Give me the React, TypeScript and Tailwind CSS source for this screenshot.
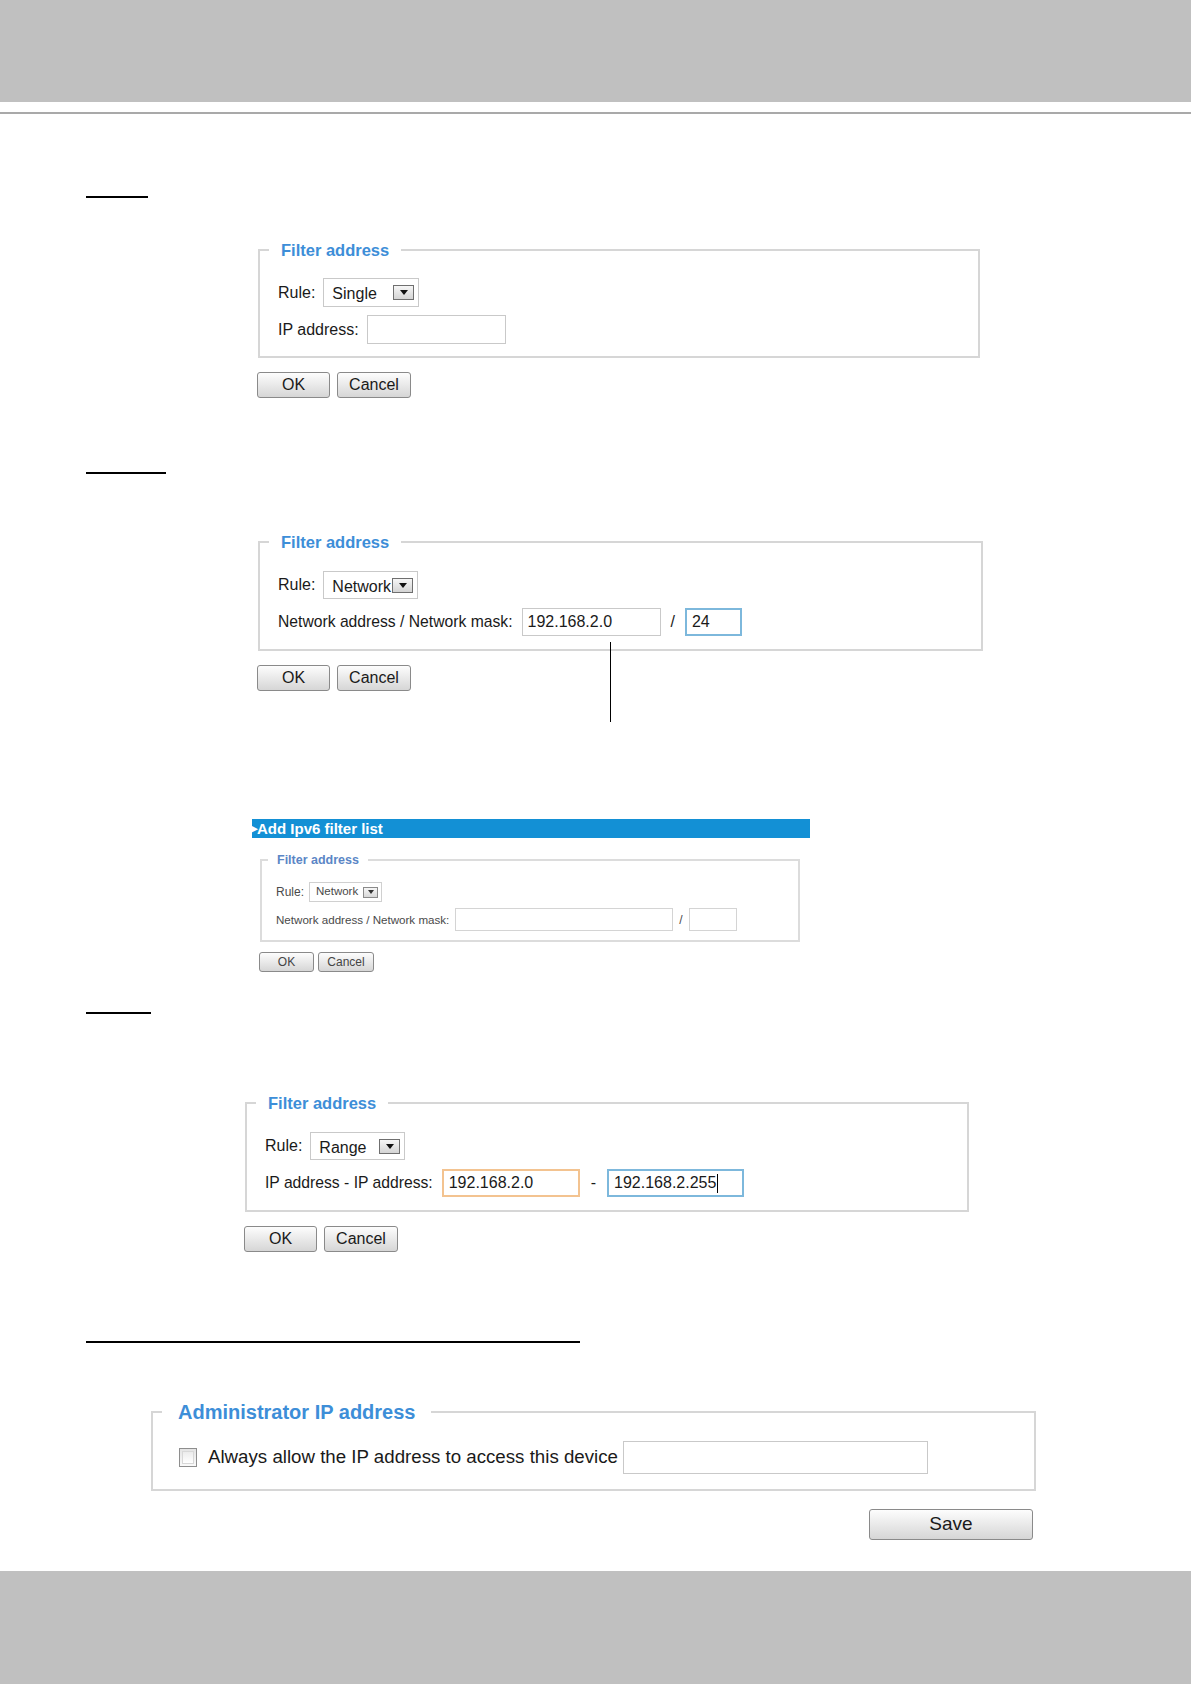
import type { ReactNode } from "react";

const FONT = "font-['Liberation_Sans',Arial,sans-serif]";

function SelectBox({ value, className }: { value: string; className: string }) {
  return (
    <div
      className={`flex items-center justify-between border border-[#c9c9c9] bg-white pl-[8px] pr-[4px] ${className}`}
    >
      <span className="pt-[3px] text-[16px] leading-none text-[#1a1a1a]">{value}</span>
      <span className="flex h-[15px] w-[21px] items-center justify-center border border-[#6f6f6f] bg-linear-to-b from-[#f6f6f6] to-[#d4d4d4]">
        <svg width="8" height="5" viewBox="0 0 8 5">
          <path d="M0 0h8L4 5z" fill="#111" />
        </svg>
      </span>
    </div>
  );
}

function TextBox({
  value,
  className,
  caret,
}: {
  value?: string;
  className: string;
  caret?: boolean;
}) {
  return (
    <div className={`flex items-center bg-white pl-[5px] text-[16px] text-[#1a1a1a] ${className}`}>
      {value}
      {caret ? <span className="ml-px h-[19px] w-px bg-black" /> : null}
    </div>
  );
}

function Btn({ children, className }: { children: ReactNode; className: string }) {
  return (
    <button
      type="button"
      className={`flex items-center justify-center rounded-[3px] border border-[#8a8a8a] bg-linear-to-b from-[#fdfdfd] to-[#d6d6d6] text-[#1a1a1a] ${className}`}
    >
      {children}
    </button>
  );
}

function Rule() {
  return <span className="text-[16px] text-[#1a1a1a]">Rule:</span>;
}

function OkCancel({ className }: { className: string }) {
  return (
    <div className={`flex gap-[7px] ${className}`}>
      <Btn className="h-[26px] w-[73px] text-[16px]">OK</Btn>
      <Btn className="h-[26px] w-[74px] text-[16px]">Cancel</Btn>
    </div>
  );
}

export default function App() {
  return (
    <div className={`relative flex min-h-[1684px] w-[1191px] flex-col bg-white ${FONT}`}>
      <div className="h-[102px] bg-[#c0c0c0]" />
      <div className="mt-[10px] h-[2px] bg-[#a9a9a9]" />

      {/* Single */}
      <div className="ml-[86px] mt-[82px] h-[2px] w-[62px] bg-black" />
      <fieldset className="ml-[258px] mt-[42px] w-[722px] border-2 border-[#d6d6d6] pb-[12px] pl-[18px] pt-[18px]">
        <legend className="ml-[-9px] px-[12px] text-[16.5px] font-bold leading-[20px] text-[#3d8ed8]">
          Filter address
        </legend>
        <div className="flex h-[29px] items-center gap-[8px]">
          <Rule />
          <SelectBox value="Single" className="h-[29px] w-[96px]" />
        </div>
        <div className="mt-[8px] flex h-[29px] items-center gap-[8px]">
          <span className="text-[16px] text-[#1a1a1a]">IP address:</span>
          <TextBox className="h-[29px] w-[139px] border border-[#c9c9c9]" />
        </div>
      </fieldset>
      <OkCancel className="ml-[257px] mt-[14px]" />

      {/* Network */}
      <div className="ml-[86px] mt-[74px] h-[2px] w-[80px] bg-black" />
      <fieldset className="ml-[258px] mt-[58px] w-[725px] border-2 border-[#d6d6d6] pb-[13px] pl-[18px] pt-[19px]">
        <legend className="ml-[-9px] px-[12px] text-[16.5px] font-bold leading-[20px] text-[#3d8ed8]">
          Filter address
        </legend>
        <div className="flex h-[28px] items-center gap-[8px]">
          <Rule />
          <SelectBox value="Network" className="h-[28px] w-[95px]" />
        </div>
        <div className="mt-[9px] flex h-[28px] items-center">
          <span className="text-[15.7px] text-[#1a1a1a]">Network address / Network mask:</span>
          <TextBox value="192.168.2.0" className="ml-[9px] h-[28px] w-[139px] border border-[#c9c9c9]" />
          <span className="mx-[10px] text-[16px] text-[#1a1a1a]">/</span>
          <TextBox value="24" className="h-[28px] w-[57px] border-2 border-[#7db8dc]" />
        </div>
      </fieldset>
      <OkCancel className="ml-[257px] mt-[14px]" />
      <div className="absolute left-[610px] top-[642px] h-[80px] w-px bg-black" />

      {/* IPv6 inset screenshot */}
      <div className="ml-[252px] mt-[128px] flex h-[19px] w-[558px] items-center bg-[#1390d5] text-[15px] font-bold leading-none text-white">
        <span className="ml-[-3px] text-[11px]">▶</span>
        <span>Add Ipv6 filter list</span>
      </div>
      <fieldset className="ml-[260px] mt-[14px] w-[540px] border-2 border-[#dcdcdc] pb-[9px] pl-[14px] pt-[14px] text-[#4a4a4a]">
        <legend className="ml-[-8px] px-[9px] text-[12.5px] font-bold leading-[16px] text-[#5b86c6]">
          Filter address
        </legend>
        <div className="flex h-[20px] items-center gap-[5px]">
          <span className="text-[12px]">Rule:</span>
          <div className="flex h-[20px] w-[73px] items-center justify-between border border-[#d0d0d0] pl-[6px] pr-[3px]">
            <span className="text-[11.5px] leading-none">Network</span>
            <span className="flex h-[11px] w-[15px] items-center justify-center border border-[#8a8a8a] bg-linear-to-b from-[#f6f6f6] to-[#d8d8d8]">
              <svg width="6" height="4" viewBox="0 0 6 4">
                <path d="M0 0h6L3 4z" fill="#333" />
              </svg>
            </span>
          </div>
        </div>
        <div className="mt-[6px] flex h-[23px] items-center">
          <span className="text-[11.6px]">Network address / Network mask:</span>
          <div className="ml-[6px] h-[23px] w-[218px] border border-[#d4d4d4]" />
          <span className="mx-[6px] text-[12px]">/</span>
          <div className="h-[23px] w-[48px] border border-[#d4d4d4]" />
        </div>
      </fieldset>
      <div className="ml-[259px] mt-[10px] flex gap-[4px]">
        <Btn className="h-[20px] w-[55px] text-[12px] text-[#444]">OK</Btn>
        <Btn className="h-[20px] w-[56px] text-[12px] text-[#444]">Cancel</Btn>
      </div>

      {/* Range */}
      <div className="ml-[86px] mt-[40px] h-[2px] w-[65px] bg-black" />
      <fieldset className="ml-[245px] mt-[79px] w-[724px] border-2 border-[#d6d6d6] pb-[13px] pl-[18px] pt-[19px]">
        <legend className="ml-[-9px] px-[12px] text-[16.5px] font-bold leading-[20px] text-[#3d8ed8]">
          Filter address
        </legend>
        <div className="flex h-[28px] items-center gap-[8px]">
          <Rule />
          <SelectBox value="Range" className="h-[28px] w-[95px]" />
        </div>
        <div className="mt-[9px] flex h-[28px] items-center">
          <span className="text-[15.7px] text-[#1a1a1a]">IP address - IP address:</span>
          <TextBox value="192.168.2.0" className="ml-[9px] h-[28px] w-[138px] border-2 border-[#f3c390]" />
          <span className="mx-[11px] text-[16px] text-[#1a1a1a]">-</span>
          <TextBox value="192.168.2.255" caret className="h-[28px] w-[137px] border-2 border-[#7db8dc]" />
        </div>
      </fieldset>
      <OkCancel className="ml-[244px] mt-[14px]" />

      {/* Administrator IP address */}
      <div className="ml-[86px] mt-[89px] h-[2px] w-[494px] bg-black" />
      <fieldset className="ml-[151px] mt-[57px] w-[885px] border-2 border-[#d6d6d6] pb-[15px] pl-[26px] pt-[17px]">
        <legend className="ml-[-17px] px-[16px] text-[20px] font-bold leading-[24px] text-[#3d8ed8]">
          Administrator IP address
        </legend>
        <div className="flex h-[33px] items-center">
          <span className="flex h-[19px] w-[18px] items-center justify-center border border-[#8e8e8e] bg-linear-to-b from-[#e4e4e4] to-[#fafafa]">
            <span className="h-[13px] w-[12px] border border-[#d8d8d8] bg-linear-to-b from-[#ececec] to-[#ffffff]" />
          </span>
          <span className="ml-[11px] text-[18.7px] text-[#1a1a1a]">
            Always allow the IP address to access this device
          </span>
          <TextBox className="ml-[5px] h-[33px] w-[305px] border border-[#c9c9c9]" />
        </div>
      </fieldset>
      <Btn className="ml-[869px] mt-[18px] h-[31px] w-[164px] text-[19px]">Save</Btn>

      <div className="mt-auto h-[113px] bg-[#c0c0c0]" />
    </div>
  );
}
